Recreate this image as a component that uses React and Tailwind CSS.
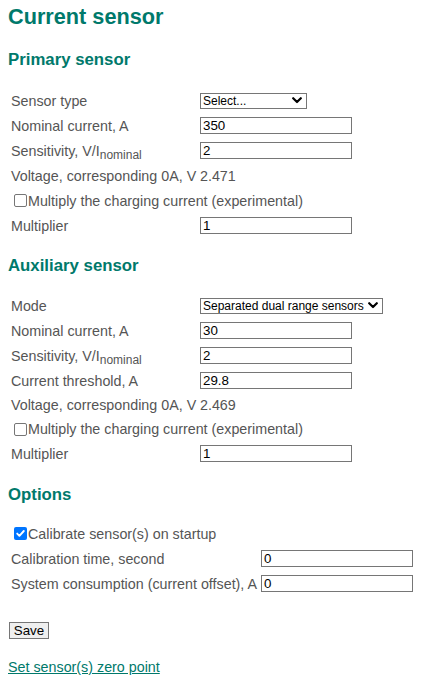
import React from "react";

const Chevron = () => (
  <svg width="10" height="7" viewBox="0 0 10 7" className="shrink-0">
    <polyline points="1.2,1.2 5,5 8.8,1.2" fill="none" stroke="#000" strokeWidth="2.2" strokeLinecap="round" strokeLinejoin="round" />
  </svg>
);

const Select = ({ value, width }) => (
  <div
    className="flex items-center justify-between h-[16px] border border-[#767676] bg-white pl-[2px] pr-[4px] text-[12px] leading-[14px] text-black"
    style={{ width }}
  >
    <span className="whitespace-nowrap">{value}</span>
    <Chevron />
  </div>
);

const Input = ({ value }) => (
  <div className="w-[152px] h-[17px] border border-[#767676] bg-white px-[2px] text-[13.33px] leading-[15px] text-black">
    {value}
  </div>
);

const Checkbox = ({ checked }) =>
  checked ? (
    <span className="ml-[6px] mr-[1px] w-[13px] h-[13px] rounded-[2px] bg-[#0075ff] flex items-center justify-center shrink-0">
      <svg width="11" height="11" viewBox="0 0 11 11">
        <polyline points="2.2,5.6 4.4,7.8 8.8,3" fill="none" stroke="#fff" strokeWidth="1.9" strokeLinecap="round" strokeLinejoin="round" />
      </svg>
    </span>
  ) : (
    <span className="ml-[6px] mr-[1px] w-[13px] h-[13px] rounded-[2px] border border-[#767676] bg-white shrink-0" />
  );

const Row = ({ label, children, h = "h-[25px]", col = "grid-cols-[192px_1fr]" }) => (
  <div className={`grid ${col} items-center ${h}`}>
    <div className="pl-[3px] whitespace-nowrap">{label}</div>
    <div>{children}</div>
  </div>
);

const CheckRow = ({ label, checked, h = "h-[25px]" }) => (
  <div className={`flex items-center ${h}`}>
    <Checkbox checked={checked} />
    <span className="whitespace-nowrap">{label}</span>
  </div>
);

const Sens = () => (
  <span>
    Sensitivity, V/I<sub className="text-[12px]">nominal</sub>
  </span>
);

const H2 = ({ children, className }) => (
  <h2 className={`text-[16.8px] leading-[19px] font-bold text-[#00796b] ${className}`}>{children}</h2>
);

export default function App() {
  return (
    <div
      className="pt-[5px] px-[8px] pb-4 bg-white text-[14.3px] leading-[16px] text-[#555]"
      style={{ fontFamily: '"Liberation Sans", Arial, sans-serif' }}
    >
      <h1 className="text-[21.7px] leading-[24px] font-bold text-[#00796b]">Current sensor</h1>

      <H2 className="mt-[21px]">Primary sensor</H2>
      <div className="mt-[19px] flex flex-col">
        <Row label="Sensor type">
          <Select value="Select..." width="107px" />
        </Row>
        <Row label="Nominal current, A">
          <Input value="350" />
        </Row>
        <Row label={<Sens />}>
          <Input value="2" />
        </Row>
        <Row label="Voltage, corresponding 0A, V">2.471</Row>
        <CheckRow label="Multiply the charging current (experimental)" />
        <Row label="Multiplier">
          <Input value="1" />
        </Row>
      </div>

      <H2 className="mt-[18px]">Auxiliary sensor</H2>
      <div className="mt-[18px] flex flex-col">
        <Row label="Mode">
          <Select value="Separated dual range sensors" width="183px" />
        </Row>
        <Row label="Nominal current, A">
          <Input value="30" />
        </Row>
        <Row label={<Sens />}>
          <Input value="2" />
        </Row>
        <Row label="Current threshold, A">
          <Input value="29.8" />
        </Row>
        <Row label="Voltage, corresponding 0A, V" h="h-[24px]">
          2.469
        </Row>
        <CheckRow label="Multiply the charging current (experimental)" h="h-[24px]" />
        <Row label="Multiplier">
          <Input value="1" />
        </Row>
      </div>

      <H2 className="mt-[19px]">Options</H2>
      <div className="mt-[17px] flex flex-col">
        <CheckRow label="Calibrate sensor(s) on startup" checked />
        <Row label="Calibration time, second" col="grid-cols-[253px_1fr]">
          <Input value="0" />
        </Row>
        <Row label="System consumption (current offset), A" col="grid-cols-[253px_1fr]">
          <Input value="0" />
        </Row>
      </div>

      <div className="mt-[26px] flex">
        <button className="ml-[1px] w-[40px] h-[17px] border border-[#767676] bg-[#efefef] text-[13.33px] leading-[15px] text-black">
          Save
        </button>
      </div>

      <div className="mt-[20px]">
        <a href="#" className="text-[#00796b] underline">
          Set sensor(s) zero point
        </a>
      </div>
    </div>
  );
}
